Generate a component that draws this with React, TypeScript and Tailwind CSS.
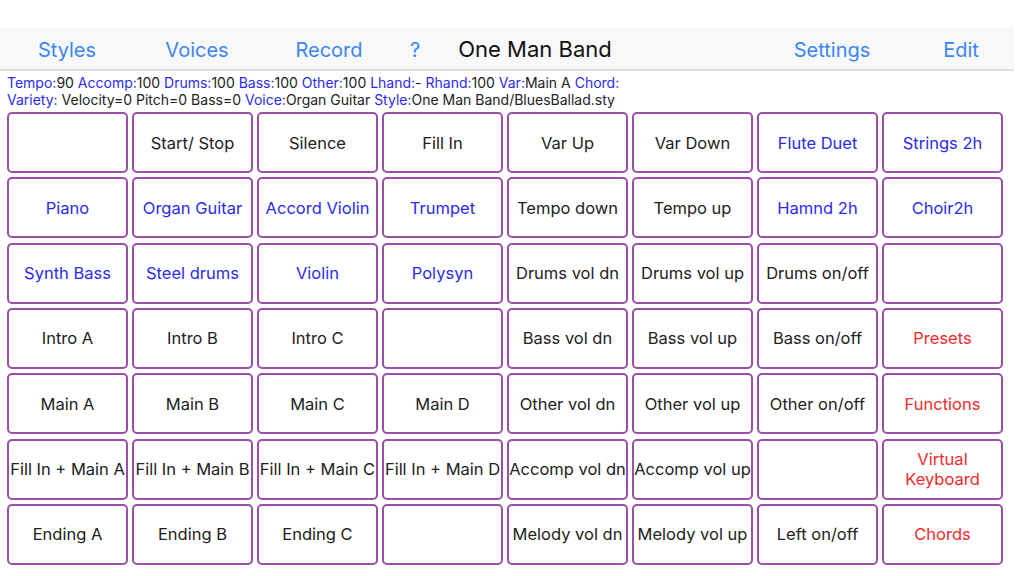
type Tone = 'k' | 'b' | 'r'

const GRID: [string, Tone][][] = [
  [['', 'k'], ['Start/ Stop', 'k'], ['Silence', 'k'], ['Fill In', 'k'], ['Var Up', 'k'], ['Var Down', 'k'], ['Flute Duet', 'b'], ['Strings 2h', 'b']],
  [['Piano', 'b'], ['Organ Guitar', 'b'], ['Accord Violin', 'b'], ['Trumpet', 'b'], ['Tempo down', 'k'], ['Tempo up', 'k'], ['Hamnd 2h', 'b'], ['Choir2h', 'b']],
  [['Synth Bass', 'b'], ['Steel drums', 'b'], ['Violin', 'b'], ['Polysyn', 'b'], ['Drums vol dn', 'k'], ['Drums vol up', 'k'], ['Drums on/off', 'k'], ['', 'k']],
  [['Intro A', 'k'], ['Intro B', 'k'], ['Intro C', 'k'], ['', 'k'], ['Bass vol dn', 'k'], ['Bass vol up', 'k'], ['Bass on/off', 'k'], ['Presets', 'r']],
  [['Main A', 'k'], ['Main B', 'k'], ['Main C', 'k'], ['Main D', 'k'], ['Other vol dn', 'k'], ['Other vol up', 'k'], ['Other on/off', 'k'], ['Functions', 'r']],
  [['Fill In + Main A', 'k'], ['Fill In + Main B', 'k'], ['Fill In + Main C', 'k'], ['Fill In + Main D', 'k'], ['Accomp vol dn', 'k'], ['Accomp vol up', 'k'], ['', 'k'], ['Virtual Keyboard', 'r']],
  [['Ending A', 'k'], ['Ending B', 'k'], ['Ending C', 'k'], ['', 'k'], ['Melody vol dn', 'k'], ['Melody vol up', 'k'], ['Left on/off', 'k'], ['Chords', 'r']],
]

const TONE: Record<Tone, string> = {
  k: 'text-[#222222]',
  b: 'text-[#2b2bf0]',
  r: 'text-[#f52a2a]',
}

function L({ children }: { children: React.ReactNode }) {
  return <span className="text-[#2b2bf0]">{children}</span>
}

export default function App() {
  return (
    <div className="w-[1024px] h-[576px] bg-white overflow-hidden font-['Inter','Liberation_Sans',sans-serif]">
      <div className="h-[28px]" />

      {/* Nav bar */}
      <nav className="w-[1014px] h-[43px] bg-[#f8f8f8] border-b-2 border-[#dedede] flex items-center pt-[2px] text-[20px] text-[#3a86f5]">
        <span className="w-[134px] text-center">Styles</span>
        <span className="w-[126px] text-center">Voices</span>
        <span className="w-[138px] text-center">Record</span>
        <span className="w-[34px] text-center">?</span>
        <span className="w-[206px] text-center text-[22px] text-[#111111]">One Man Band</span>
        <span className="w-[134px]" />
        <span className="w-[120px] text-center">Settings</span>
        <span className="w-[122px] pl-[16px] text-center">Edit</span>
      </nav>

      {/* Status */}
      <div className="px-[7px] pt-[3px] text-[14px] leading-[17px] text-[#222222]">
        <div>
          <L>Tempo:</L>90 <L>Accomp:</L>100 <L>Drums:</L>100 <L>Bass:</L>100 <L>Other:</L>100 <L>Lhand:</L>- <L>Rhand:</L>100 <L>Var:</L>Main A <L>Chord:</L>
        </div>
        <div>
          <L>Variety:</L> Velocity=0 Pitch=0 Bass=0 <L>Voice:</L>Organ Guitar <L>Style:</L>One Man Band/BluesBallad.sty
        </div>
      </div>

      {/* Button grid */}
      <div className="mt-[4px] ml-[7px] grid grid-cols-[repeat(8,121px)] auto-rows-[61px] gap-x-[4px] gap-y-[4.33px]">
        {GRID.flat().map(([label, tone], i) => (
          <button
            key={i}
            type="button"
            className={`border-2 border-[#9a4fa8] rounded-[5px] bg-white flex items-center justify-center text-center text-[16.5px] leading-[20px] ${TONE[tone]} ${label === 'Virtual Keyboard' ? 'px-6' : 'px-0'}`}
          >
            {label}
          </button>
        ))}
      </div>
    </div>
  )
}
